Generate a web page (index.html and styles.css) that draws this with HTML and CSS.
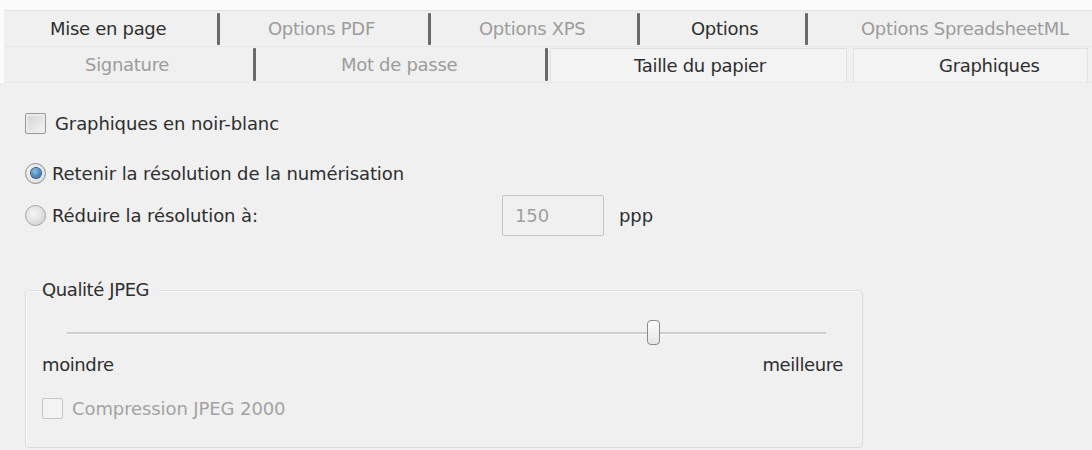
FILE: index.html
```html
<!DOCTYPE html>
<html lang="fr">
<head>
<meta charset="utf-8">
<title>Graphiques</title>
<link rel="stylesheet" href="styles.css">
</head>
<body>
<div class="window">
  <div class="tabs">
    <div class="tabrow row1">
      <div class="tab t1 active">Mise en page</div>
      <div class="sep"></div>
      <div class="tab t2">Options PDF</div>
      <div class="sep"></div>
      <div class="tab t3">Options XPS</div>
      <div class="sep"></div>
      <div class="tab t4 active">Options</div>
      <div class="sep"></div>
      <div class="tab t5">Options SpreadsheetML</div>
    </div>
    <div class="tabrow row2">
      <div class="tab u1">Signature</div>
      <div class="sep"></div>
      <div class="tab u2">Mot de passe</div>
      <div class="sep"></div>
      <div class="tab u3 active boxed">Taille du papier</div>
      <div class="tab u4 active boxed">Graphiques</div>
    </div>
  </div>

  <div class="content">
    <label class="row check-row">
      <span class="checkbox"></span>
      <span class="label">Graphiques en noir-blanc</span>
    </label>

    <label class="row radio-row r1">
      <span class="radio checked"><span class="dot"></span></span>
      <span class="label">Retenir la résolution de la numérisation</span>
    </label>

    <div class="row radio-row r2">
      <span class="radio"></span>
      <span class="label grow">Réduire la résolution à:</span>
      <span class="numbox">150</span>
      <span class="unit">ppp</span>
    </div>

    <div class="group">
      <div class="legend">Qualité JPEG</div>
      <div class="slider">
        <div class="track"></div>
        <div class="thumb"></div>
      </div>
      <div class="scale">
        <span>moindre</span>
        <span>meilleure</span>
      </div>
      <div class="row check-row disabled">
        <span class="checkbox"></span>
        <span class="label">Compression JPEG 2000</span>
      </div>
    </div>
  </div>
</div>
</body>
</html>
```

FILE: styles.css
```css
* { box-sizing: border-box; }

html, body {
  margin: 0;
  padding: 0;
}

body {
  width: 1092px;
  height: 450px;
  overflow: hidden;
  background: #f0f0f0;
  font-family: "DejaVu Sans", "Liberation Sans", sans-serif;
  font-size: 18px;
  letter-spacing: -0.1px;
  color: #2e2e2e;
}

.window {
  height: 450px;
  display: flex;
  flex-direction: column;
}

/* ---------- tabs ---------- */
.tabs {
  padding-top: 10px;
  background: #fbfbfb;
}

.tabrow {
  display: flex;
  align-items: center;
  background: #f0f0f0;
}

.row1 {
  height: 36px;
  border-top: 1px solid #e2e2e2;
  margin-left: 4px;
}

.row2 {
  height: 37px;
  border-top: 1px solid #e6e6e6;
  border-bottom: 1px solid #e9e9e9;
  margin-left: 4px;
}

.tab {
  height: 100%;
  display: flex;
  align-items: center;
  color: #9c9c9c;
  white-space: nowrap;
  letter-spacing: -0.3px;
}

.tab.active { color: #2e2e2e; }

.sep {
  width: 3px;
  height: 32px;
  background: #6a6a6a;
  border-radius: 1px;
  flex: none;
}

.t1 { width: 213px; padding-left: 46px; }
.t2 { width: 208px; padding-left: 48px; }
.t3 { width: 206px; padding-left: 48px; }
.t4 { width: 165px; padding-left: 51px; }
.t5 { flex: 1; padding-left: 53px; }

.row2 .sep { height: 33px; }

.u1 { width: 249px; padding-left: 81px; }
.u2 { width: 289px; padding-left: 85px; }
.u3 { width: 297px; padding-left: 83px; margin-left: 2px; }
.u4 { width: 235px; padding-left: 85px; margin-left: 6px; }

.boxed {
  height: 34px;
  align-self: flex-end;
  background: #f3f3f3;
  border: 1px solid #e2e2e2;
  border-bottom: none;
}

/* ---------- content ---------- */
.content {
  flex: 1;
  padding: 30px 0 0 25px;
  display: flex;
  flex-direction: column;
}

.row {
  display: flex;
  align-items: center;
}

.label { white-space: nowrap; }

.check-row .checkbox {
  width: 21px;
  height: 21px;
  border: 1px solid #9a9a9a;
  background: linear-gradient(135deg, #d4d4d4, #f4f4f4);
  box-shadow: inset 0 0 0 2px #ececec;
  border-radius: 2px;
  margin-right: 9px;
  flex: none;
}

.r1 { margin-top: 27px; height: 24px; }
.r2 { margin-top: 10px; height: 41px; }

.radio {
  width: 21px;
  height: 21px;
  border-radius: 50%;
  border: 1px solid #a4a4a4;
  background: radial-gradient(circle at 40% 40%, #f6f6f6, #cdcdcd);
  margin-right: 6px;
  display: flex;
  align-items: center;
  justify-content: center;
  flex: none;
}

.radio.checked {
  background: radial-gradient(circle at 40% 40%, #fafafa, #d6d6d6);
  border-color: #8c8c8c;
}

.radio .dot {
  width: 10px;
  height: 10px;
  border-radius: 50%;
  background: radial-gradient(circle at 40% 35%, #8cc0ea, #1d5b98);
  box-shadow: 0 0 0 1px #24507e;
}

.r2 .grow { width: 452px; }

.numbox {
  width: 102px;
  height: 41px;
  border: 1px solid #c4c4c4;
  border-radius: 2px;
  background: #f0f0f0;
  color: #a0a0a0;
  padding-left: 12px;
  display: flex;
  align-items: center;
  margin-left: -2px;
}

.unit {
  margin-left: 15px;
  color: #2e2e2e;
}

/* ---------- group box ---------- */
.group {
  margin-top: 54px;
  width: 838px;
  height: 158px;
  border: 1px solid #dcdcdc;
  border-radius: 4px;
  box-shadow: inset 1px 1px 0 #fafafa;
  padding: 0 19px 0 16px;
  display: flex;
  flex-direction: column;
}

.legend {
  align-self: flex-start;
  margin-top: -12px;
  background: #f0f0f0;
  padding-right: 10px;
  height: 22px;
  line-height: 22px;
  color: #2e2e2e;
  letter-spacing: -0.4px;
}

.slider {
  margin: 19px 17px 0 25px;
  height: 26px;
  display: flex;
  align-items: center;
  position: relative;
}

.track {
  flex: 1;
  height: 3px;
  background: #cdcdcd;
  border-bottom: 1px solid #fbfbfb;
}

.thumb {
  position: absolute;
  left: 580px;
  top: 0;
  width: 13px;
  height: 25px;
  border: 1px solid #8a8a8a;
  border-radius: 4px;
  background: linear-gradient(#fdfdfd, #e4e4e4);
}

.scale {
  margin-top: 8px;
  display: flex;
  justify-content: space-between;
  color: #2e2e2e;
  letter-spacing: -0.4px;
}

.group .check-row {
  margin-top: 23px;
}

.disabled .checkbox {
  background: #f3f3f3;
  border-color: #c6c6c6;
  box-shadow: none;
}

.disabled .label { color: #a3a3a3; }
```
